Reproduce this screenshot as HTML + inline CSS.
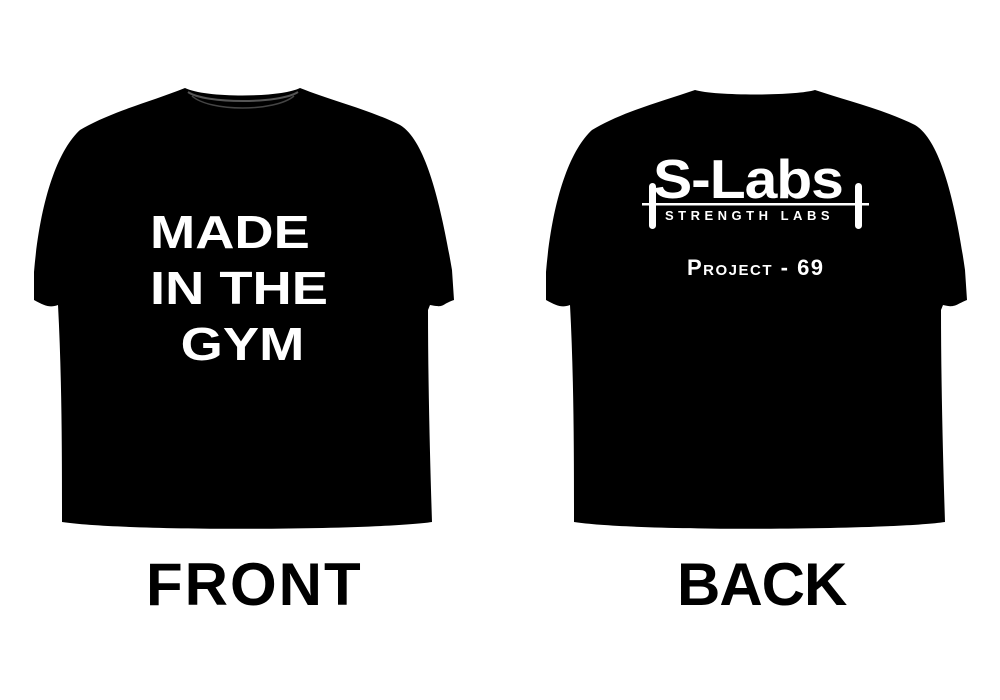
<!DOCTYPE html>
<html><head><style>
body{margin:0;width:1000px;height:700px;background:#fff;position:relative;overflow:hidden;font-family:"Liberation Sans",sans-serif}
.t{position:absolute;white-space:nowrap;font-weight:bold;transform-origin:0 0}
</style></head><body>
<svg width="1000" height="700" style="position:absolute;left:0;top:0">
<path d="M185,88 C205,98 280,98 300,88 C330,100 370,110 400,125 C425,140 440,200 452,270 L454,300 C440,305 445,308 430,305 L428,310 C428,380 430,460 432,522 C380,530 130,532 62,522 C62,460 62,380 58,305 C50,308 45,306 34,300 L34,272 C40,200 58,150 80,130 C110,112 150,102 185,88 Z" fill="#000"/>
<path d="M188,92 C205,104 280,104 298,92" stroke="#555" stroke-width="2" fill="none"/>
<path d="M192,96 C210,112 275,112 294,96" stroke="#444" stroke-width="1.5" fill="none"/>
<path d="M695,90 C715,96 795,96 815,90 C845,100 885,110 915,125 C940,140 955,200 965,270 L967,300 C955,305 955,308 943,305 L941,310 C941,380 943,460 945,522 C892,530 640,532 574,522 C574,460 574,380 570,305 C562,308 557,306 546,300 L546,272 C552,200 570,150 592,130 C622,112 660,102 695,90 Z" fill="#000"/>
<rect x="642" y="203" width="227" height="2.5" fill="#fff"/>
<rect x="649" y="183" width="7" height="46" rx="3.5" fill="#fff"/>
<rect x="855" y="183" width="7" height="46" rx="3.5" fill="#fff"/>
</svg>
<div class="t" style="left:150px;top:204px;font-size:46px;color:#fff;line-height:56px;transform:scaleX(1.18)">MADE<br>IN THE<br><span style="margin-left:26px">GYM</span></div>
<div class="t" style="left:146px;top:550px;font-size:60px;color:#000;letter-spacing:2px">FRONT</div>
<div class="t" style="left:677px;top:550px;font-size:60px;color:#000;letter-spacing:-1px">BACK</div>
<div class="t" style="left:653px;top:147px;font-size:55px;color:#fff;letter-spacing:-1px;transform:scaleX(1.07)">S-Labs</div>
<div class="t" style="left:665px;top:208px;font-size:13px;color:#fff;letter-spacing:4.5px">STRENGTH LABS</div>
<div class="t" style="left:687px;top:255px;font-size:22px;color:#fff;font-variant:small-caps;letter-spacing:1.5px">Project - 69</div>
</body></html>
